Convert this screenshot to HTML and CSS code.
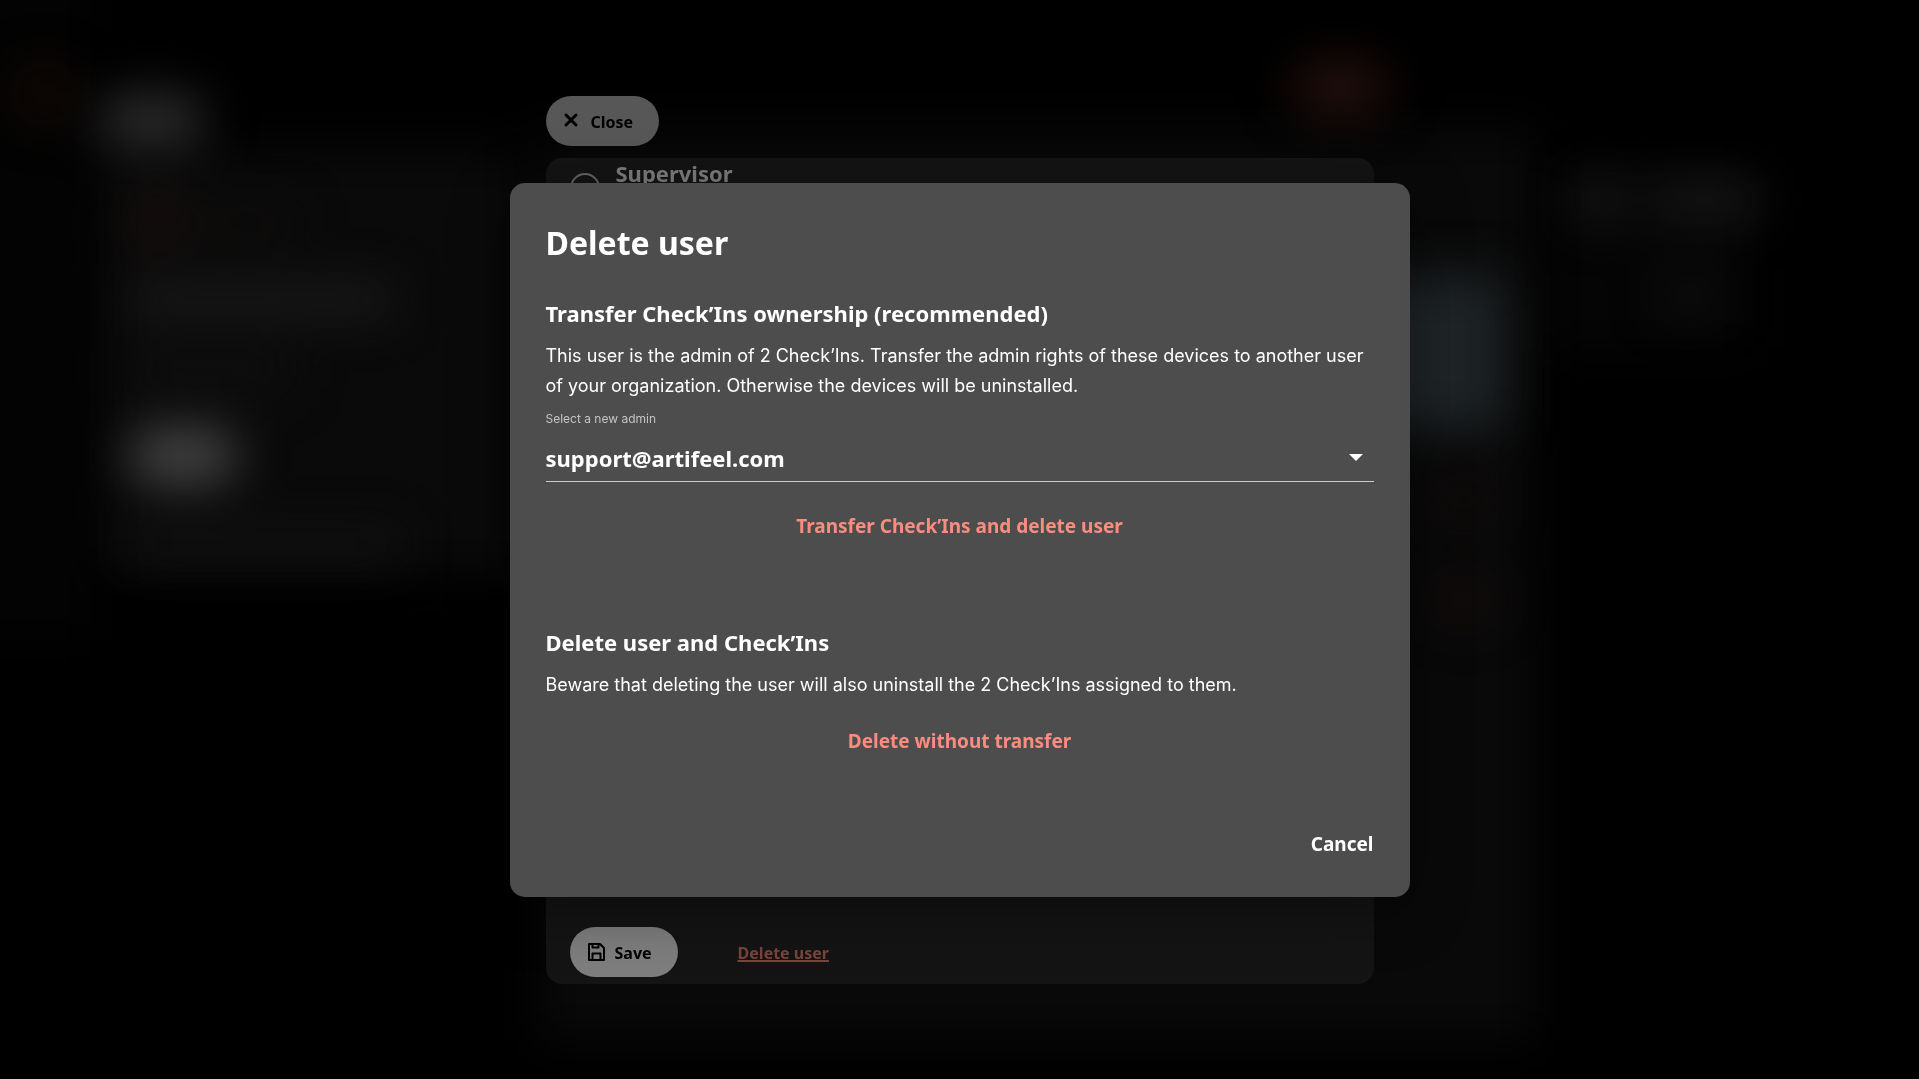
FILE: index.html
```html
<!DOCTYPE html>
<html lang="en">
<head>
  <meta charset="utf-8">
  <meta name="viewport" content="width=device-width, initial-scale=1">
  <title>Delete user</title>
  <link rel="stylesheet" href="styles.css">
</head>
<body>
  <svg class="backdrop" viewBox="0 0 1919 1079" preserveAspectRatio="xMidYMid slice" aria-hidden="true">
    <defs>
      <filter id="soft" x="-100%" y="-100%" width="300%" height="300%" color-interpolation-filters="sRGB">
        <feGaussianBlur stdDeviation="24"/>
      </filter>
    </defs>
    <!-- cards -->
    <g filter="url(#soft)">
      <rect x="-60" y="-60" width="150" height="700" fill="#030303"/>
      <rect x="102" y="150" width="420" height="425" fill="#0a0a0a"/>
      <rect x="540" y="130" width="995" height="910" fill="#090909"/>
      <rect x="1555" y="160" width="200" height="190" fill="#050505"/>
    </g>
    <!-- controls and text on the cards -->
    <g filter="url(#soft)">
      <rect x="98" y="94" width="108" height="54" rx="27" fill="#2c2c2c"/>
      <rect x="129" y="427" width="108" height="58" rx="27" fill="#434343"/>
      <rect x="130" y="286" width="262" height="28" fill="#1e1e1e"/>
      <rect x="130" y="350" width="160" height="40" fill="#0e0e0e"/>
      <rect x="130" y="534" width="270" height="24" fill="#141414"/>
      <circle cx="44" cy="94" r="28" fill="#140905"/>
      <circle cx="157" cy="222" r="26" fill="#1a100d"/>
      <rect x="200" y="212" width="95" height="20" fill="#110d0c"/>
      <ellipse cx="1340" cy="88" rx="50" ry="28" fill="#25110d"/>
      <rect x="1340" y="275" width="163" height="155" fill="#1f2427"/>
      <ellipse cx="1463" cy="500" rx="34" ry="20" fill="#120c0b"/>
      <ellipse cx="1463" cy="600" rx="34" ry="20" fill="#160d0c"/>
      <circle cx="1600" cy="200" r="24" fill="#181818"/>
      <rect x="1650" y="184" width="110" height="34" fill="#181818"/>
      <rect x="1660" y="282" width="60" height="26" fill="#121212"/>
    </g>
  </svg>

  <main class="drawer">
    <button class="pill pill-close" type="button">
      <svg class="pill-icon" width="20" height="20" viewBox="0 0 20 20" aria-hidden="true">
        <path d="M4 4l10 10M14 4l-10 10" fill="none" stroke="currentColor" stroke-width="3" stroke-linecap="round"/>
      </svg>
      <span class="pill-label">Close</span>
    </button>

    <form class="panel">
      <label class="role">
        <input class="role-radio" type="radio" name="role">
        <span class="role-name">Supervisor</span>
      </label>
      <div class="panel-actions">
        <button class="pill pill-save" type="button">
          <svg class="pill-icon" width="20" height="20" viewBox="0 0 20 20" fill="none" stroke="currentColor" stroke-width="2" stroke-linejoin="round" aria-hidden="true">
            <path d="M3 2h11l4 4v12h-15z"/>
            <path d="M6.500 2v3.500h6v-3.500M6.500 18v-6.500h8v6.500"/>
          </svg>
          <span class="pill-label">Save</span>
        </button>
        <a class="delete-link" href="#delete">Delete user</a>
      </div>
    </form>
  </main>

  <div class="overlay">
    <section class="dialog" id="delete" role="dialog" aria-modal="true" aria-labelledby="dialog-title">
      <h1 class="dialog-title" id="dialog-title">Delete user</h1>

      <h2 class="dialog-heading">Transfer Check’Ins ownership (recommended)</h2>
      <p class="dialog-text">This user is the admin of 2 Check’Ins. Transfer the admin rights of these devices to another user of your organization. Otherwise the devices will be uninstalled.</p>
      <label class="field-label" for="admin">Select a new admin</label>
      <div class="field">
        <select class="field-select" id="admin">
          <option>support@artifeel.com</option>
        </select>
        <svg class="field-arrow" width="14" height="7" viewBox="0 0 14 7" aria-hidden="true"><path d="M0 0h14l-7 7z" fill="#fff"/></svg>
      </div>
      <button class="text-button danger transfer" type="button">Transfer Check’Ins and delete user</button>

      <h2 class="dialog-heading">Delete user and Check’Ins</h2>
      <p class="dialog-text">Beware that deleting the user will also uninstall the 2 Check’Ins assigned to them.</p>
      <button class="text-button danger without" type="button">Delete without transfer</button>

      <button class="text-button cancel" type="button">Cancel</button>
    </section>
  </div>
</body>
</html>
```
FILE: styles.css
```css
:root {
  --strong: "Noto Sans", "Open Sans", sans-serif;
  --text: Inter, "Noto Sans", sans-serif;
}

* {
  box-sizing: border-box;
}

body {
  margin: 0;
  min-height: 100vh;
  background: #000;
  color: #fff;
  font-family: var(--text);
}

button,
select {
  font-family: var(--strong);
  font-weight: 700;
  color: inherit;
  border: 0;
  background: none;
  cursor: pointer;
}

.backdrop {
  position: fixed;
  inset: 0;
  width: 100%;
  height: 100%;
}

/* Drawer behind the dialog */

.drawer {
  position: relative;
  display: flex;
  flex-direction: column;
  align-items: flex-start;
  gap: 12px;
  width: 100%;
  max-width: 828px;
  height: 100vh;
  margin: 0 auto;
  padding: 96px 0 95px;
}

.pill {
  display: flex;
  align-items: center;
  gap: 9px;
  height: 50px;
  padding: 0 26px 0 16px;
  border-radius: 25px;
  font-size: 16px;
  line-height: 24px;
  color: #000;
}

.pill-close {
  flex: none;
  background: #575757;
}

.pill-save {
  background: #7e7e7e;
}

.pill-icon {
  flex: none;
}

.pill-label,
.delete-link {
  padding-top: 2px;
}

.panel {
  flex: 1;
  width: 100%;
  min-height: 0;
  display: flex;
  flex-direction: column;
  justify-content: space-between;
  padding: 0 24px 7px;
  border-radius: 16px;
  background: #141414;
  overflow: hidden;
}

.role {
  display: flex;
  align-items: flex-start;
  gap: 16px;
  color: #7f7f7f;
}

.role-radio {
  appearance: none;
  width: 30px;
  height: 30px;
  margin: 15px 0 0;
  border: 2px solid #666;
  border-radius: 50%;
}

.role-name {
  font: 700 22px/30px var(--strong);
}

.panel-actions {
  display: flex;
  align-items: center;
  gap: 60px;
}

.delete-link {
  font: 700 16px/24px var(--strong);
  color: #7b443d;
  text-decoration-thickness: 2px;
  text-underline-offset: 1px;
}

/* Dialog */

.overlay {
  position: fixed;
  inset: 0;
  display: grid;
  place-items: center;
  overflow: auto;
}

.dialog {
  display: flex;
  flex-direction: column;
  width: 100%;
  max-width: 900px;
  padding: 36px;
  border-radius: 15px;
  background: #4d4d4d;
  box-shadow: 0 12px 60px rgba(0, 0, 0, 0.4);
}

.dialog-title {
  margin: 0 0 30px;
  font: 700 32px/48px var(--strong);
}

.dialog-heading {
  margin: 0 0 12px;
  font: 700 22px/32px var(--strong);
}

.dialog-text {
  margin: 0;
  font-size: 18px;
  line-height: 30px;
}

.field-label {
  margin: 9px 0 7px;
  font-size: 12px;
  line-height: 18px;
  color: #c4c4c4;
}

.field {
  display: grid;
  align-items: center;
  border-bottom: 1px solid #ccc;
}

.field-select,
.field-arrow {
  grid-area: 1 / 1;
}

.field-select {
  appearance: none;
  width: 100%;
  height: 46px;
  padding: 0;
  font-size: 22px;
}

.field-select option {
  color: #000;
}

.field-arrow {
  justify-self: end;
  margin-right: 11px;
  pointer-events: none;
}

.text-button {
  align-self: center;
  padding: 0;
  font-size: 19px;
  line-height: 48px;
}

.danger {
  color: #fb8d80;
}

.transfer {
  margin: 20px 0 76px;
}

.without {
  margin: 17px 0 62px;
}

.cancel {
  align-self: flex-end;
  line-height: 34px;
}
```
